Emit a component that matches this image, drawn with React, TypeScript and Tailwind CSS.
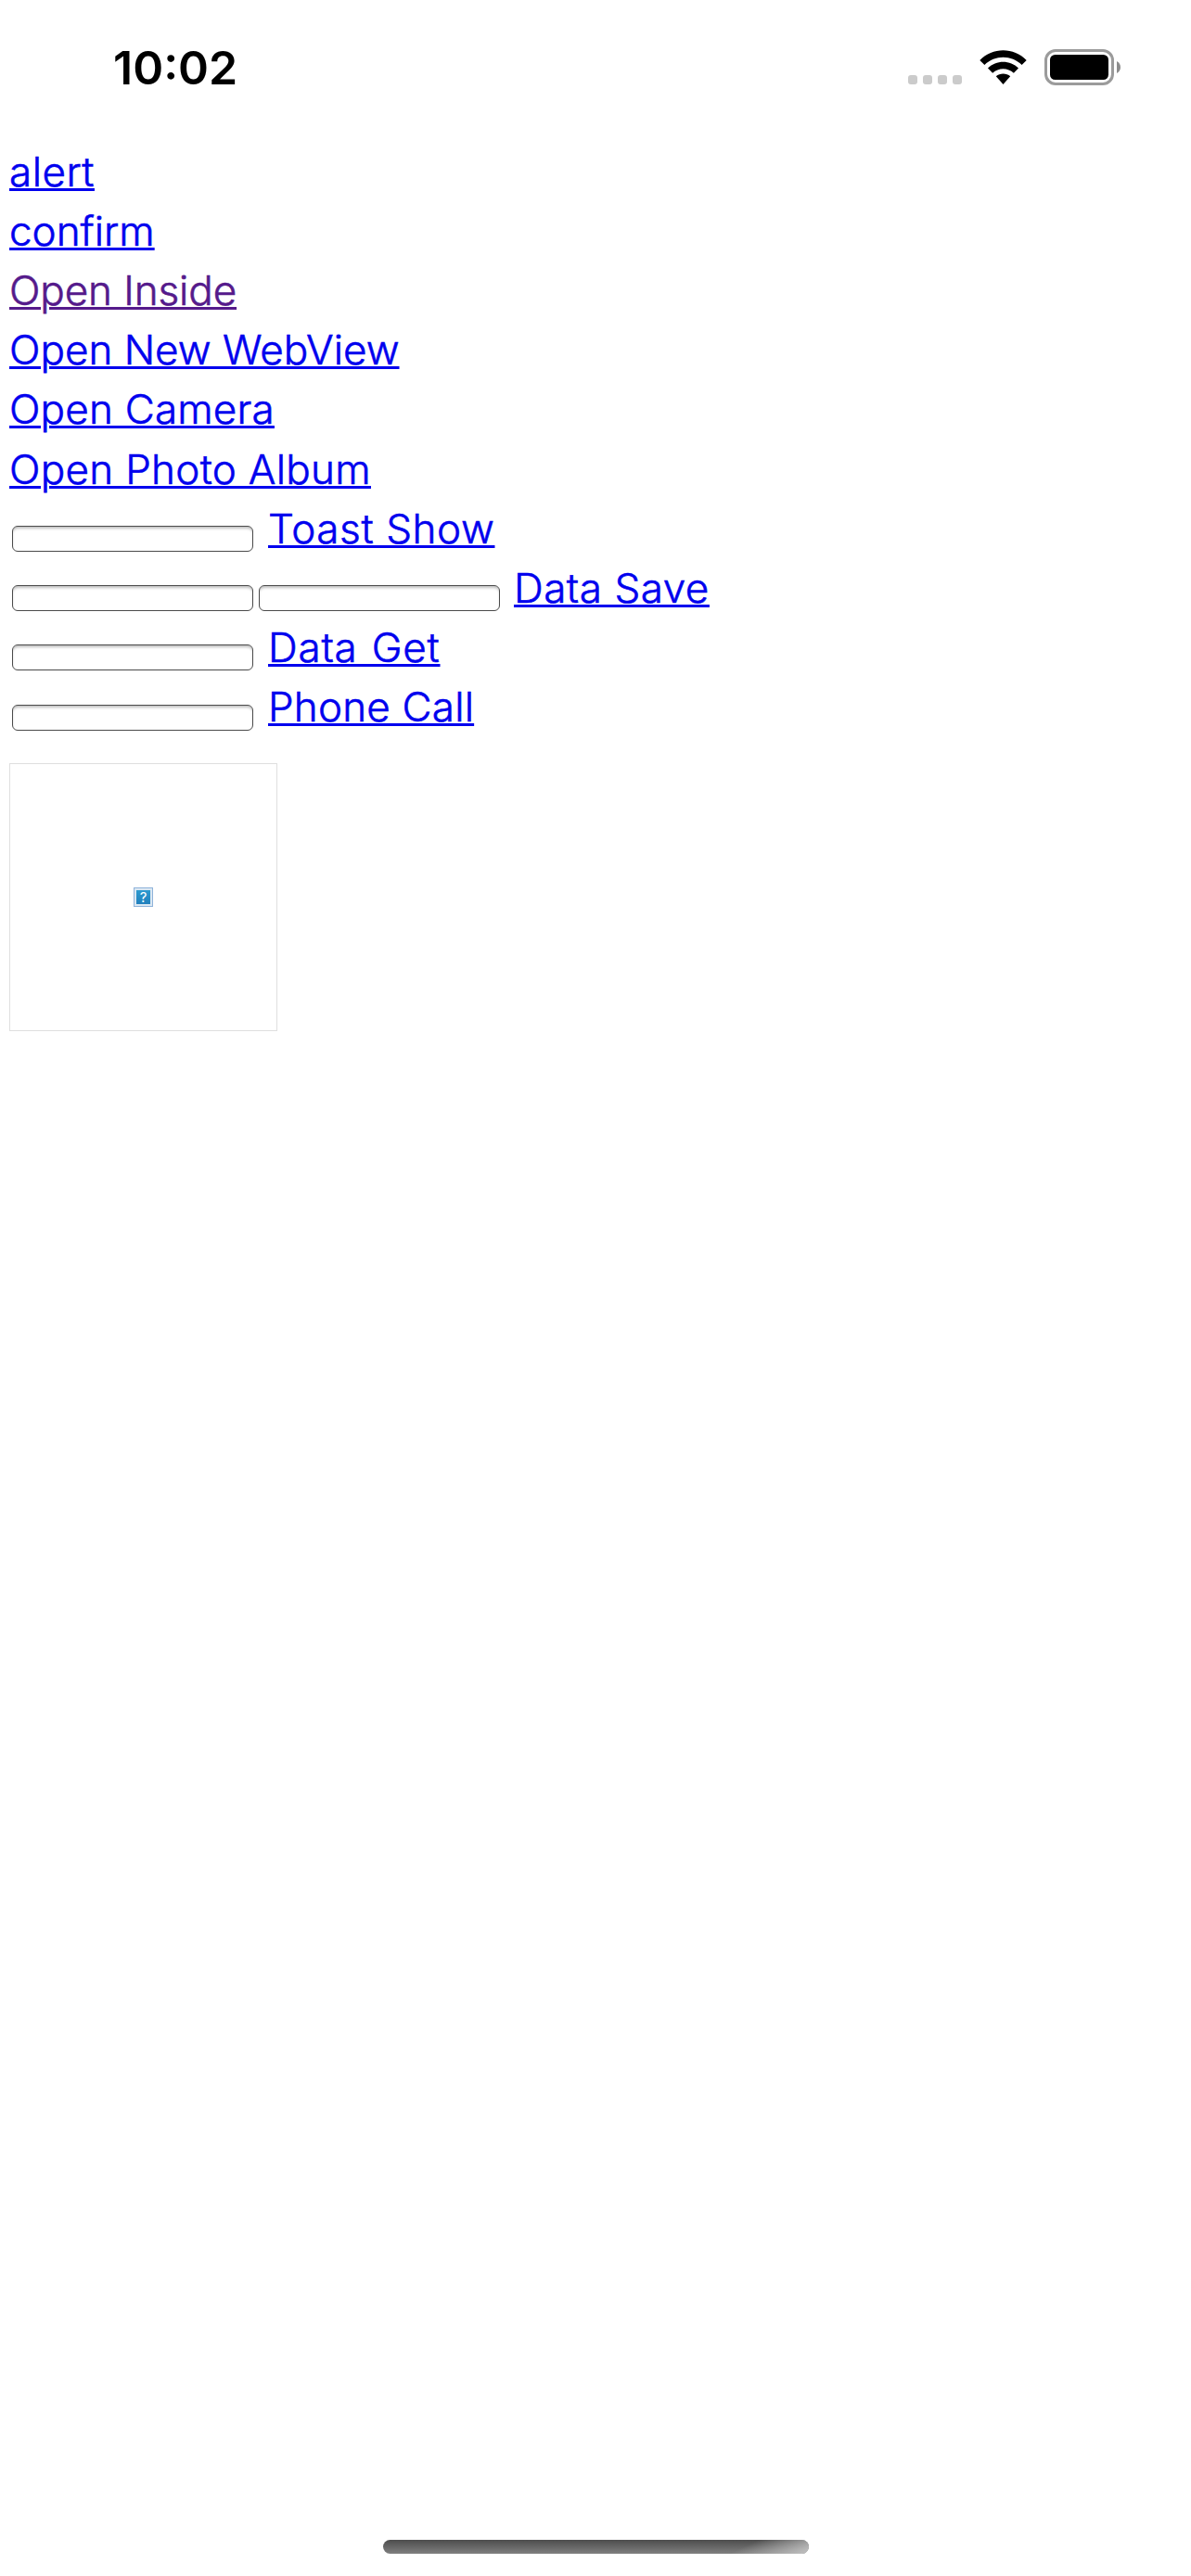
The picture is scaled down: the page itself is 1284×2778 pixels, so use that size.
import type { ReactNode } from "react";

function Link({ children, className = "text-[#0000ee]" }: { children: ReactNode; className?: string }) {
  return (
    <a
      className={`whitespace-pre underline decoration-[3px] underline-offset-[2px] [-webkit-text-stroke:0.6px_currentColor] ${className}`}
    >
      {children}
    </a>
  );
}

function Row({ children }: { children: ReactNode }) {
  return <div className="flex h-[64.2px] items-start">{children}</div>;
}

function Field() {
  return (
    <input
      type="text"
      className="mt-[29.4px] mr-[2.8px] ml-[2.8px] h-7 w-[260.4px] rounded-[6px] border border-[#4a4a4a] bg-white shadow-[inset_0_3px_3px_-1px_rgba(0,0,0,0.25)]"
    />
  );
}

function StatusBar() {
  return (
    <header className="flex h-[152.6px] items-start justify-between pr-[76px] pl-[122px]">
      <div className="mt-[43px] text-[50px] leading-[60px] font-semibold text-black">10:02</div>
      <div className="mt-[53px] flex">
        <div className="mt-7 flex gap-[6px]">
          {[0, 1, 2, 3].map((i) => (
            <span key={i} className="size-[10px] rounded-[3px] bg-[#cbcbcb]" />
          ))}
        </div>
        <svg className="mt-px ml-[19px]" width="51" height="38" viewBox="0 0 51 38">
          <path d="M0.3 11 C14 -3.5 37 -3.5 50.7 11 L45.6 16.1 C34.5 5 16.5 5 5.4 16.1 Z" />
          <path d="M9 19.6 C18 10.6 33 10.6 42 19.6 L36.9 24.8 C30.5 18.8 20.5 18.8 14.1 24.8 Z" />
          <path d="M17.8 28.3 C22 24.6 29 24.6 33.2 28.3 L25.5 37 Z" />
        </svg>
        <div className="ml-[19px] flex items-center">
          <div className="h-[39px] w-[75px] rounded-[12px] border-[3px] border-[#9b9b9b] p-[3px]">
            <div className="h-full rounded-[5.5px] bg-black" />
          </div>
          <svg className="ml-[3px]" width="4" height="13" viewBox="0 0 4 13">
            <path d="M0 0 C5.3 2.4 5.3 10.6 0 13 Z" fill="#8c8c8c" />
          </svg>
        </div>
      </div>
    </header>
  );
}

function MissingImage() {
  return (
    <div className="mt-[28.4px] flex size-[289px] items-center justify-center border border-[#dfdfdf]">
      <div className="flex size-[21px] items-center justify-center border border-[#8fb3da] bg-[#dbe8f3]">
        <div className="flex size-[15px] items-center justify-center bg-linear-to-b from-[#2d9bd0] to-[#2180bd] text-[15px] leading-[15px] font-normal text-white">
          ?
        </div>
      </div>
    </div>
  );
}

export default function App() {
  return (
    <div className="flex h-[2778px] w-[1284px] flex-col bg-white font-['Inter',sans-serif]">
      <StatusBar />
      <main className="flex-1 pl-[10px] text-[44px] leading-[64.2px] font-light">
        <Row><Link className="tracking-[0.48px] text-[#0000ee]">alert</Link></Row>
        <Row><Link>confirm</Link></Row>
        <Row><Link className="tracking-[-0.09px] text-[#551a8b]">Open Inside</Link></Row>
        <Row><Link>Open New WebView</Link></Row>
        <Row><Link className="tracking-[0.2px] text-[#0000ee]">Open Camera</Link></Row>
        <Row><Link className="tracking-[0.3px] text-[#0000ee]">Open Photo Album</Link></Row>
        <Row>
          <Field />
          <Link className="ml-[13px] tracking-[0.62px] text-[#0000ee]">Toast Show</Link>
        </Row>
        <Row>
          <Field />
          <Field />
          <Link className="ml-[12px] tracking-[0.53px] text-[#0000ee]">Data Save</Link>
        </Row>
        <Row>
          <Field />
          <Link className="ml-[13px] tracking-[0.8px] [word-spacing:2px] text-[#0000ee]">Data Get</Link>
        </Row>
        <Row>
          <Field />
          <Link className="ml-[13px] tracking-[0.2px] text-[#0000ee]">Phone Call</Link>
        </Row>
        <MissingImage />
      </main>
      <footer className="flex h-[39px] shrink-0 justify-center">
        <div className="h-[15px] w-[459px] overflow-hidden rounded-full bg-linear-to-b from-[#4d4d4d] to-[#808080]">
          <div className="ml-auto h-full w-[100px] bg-[linear-gradient(155deg,transparent_35%,#bdbdbd_95%)]" />
        </div>
      </footer>
    </div>
  );
}
